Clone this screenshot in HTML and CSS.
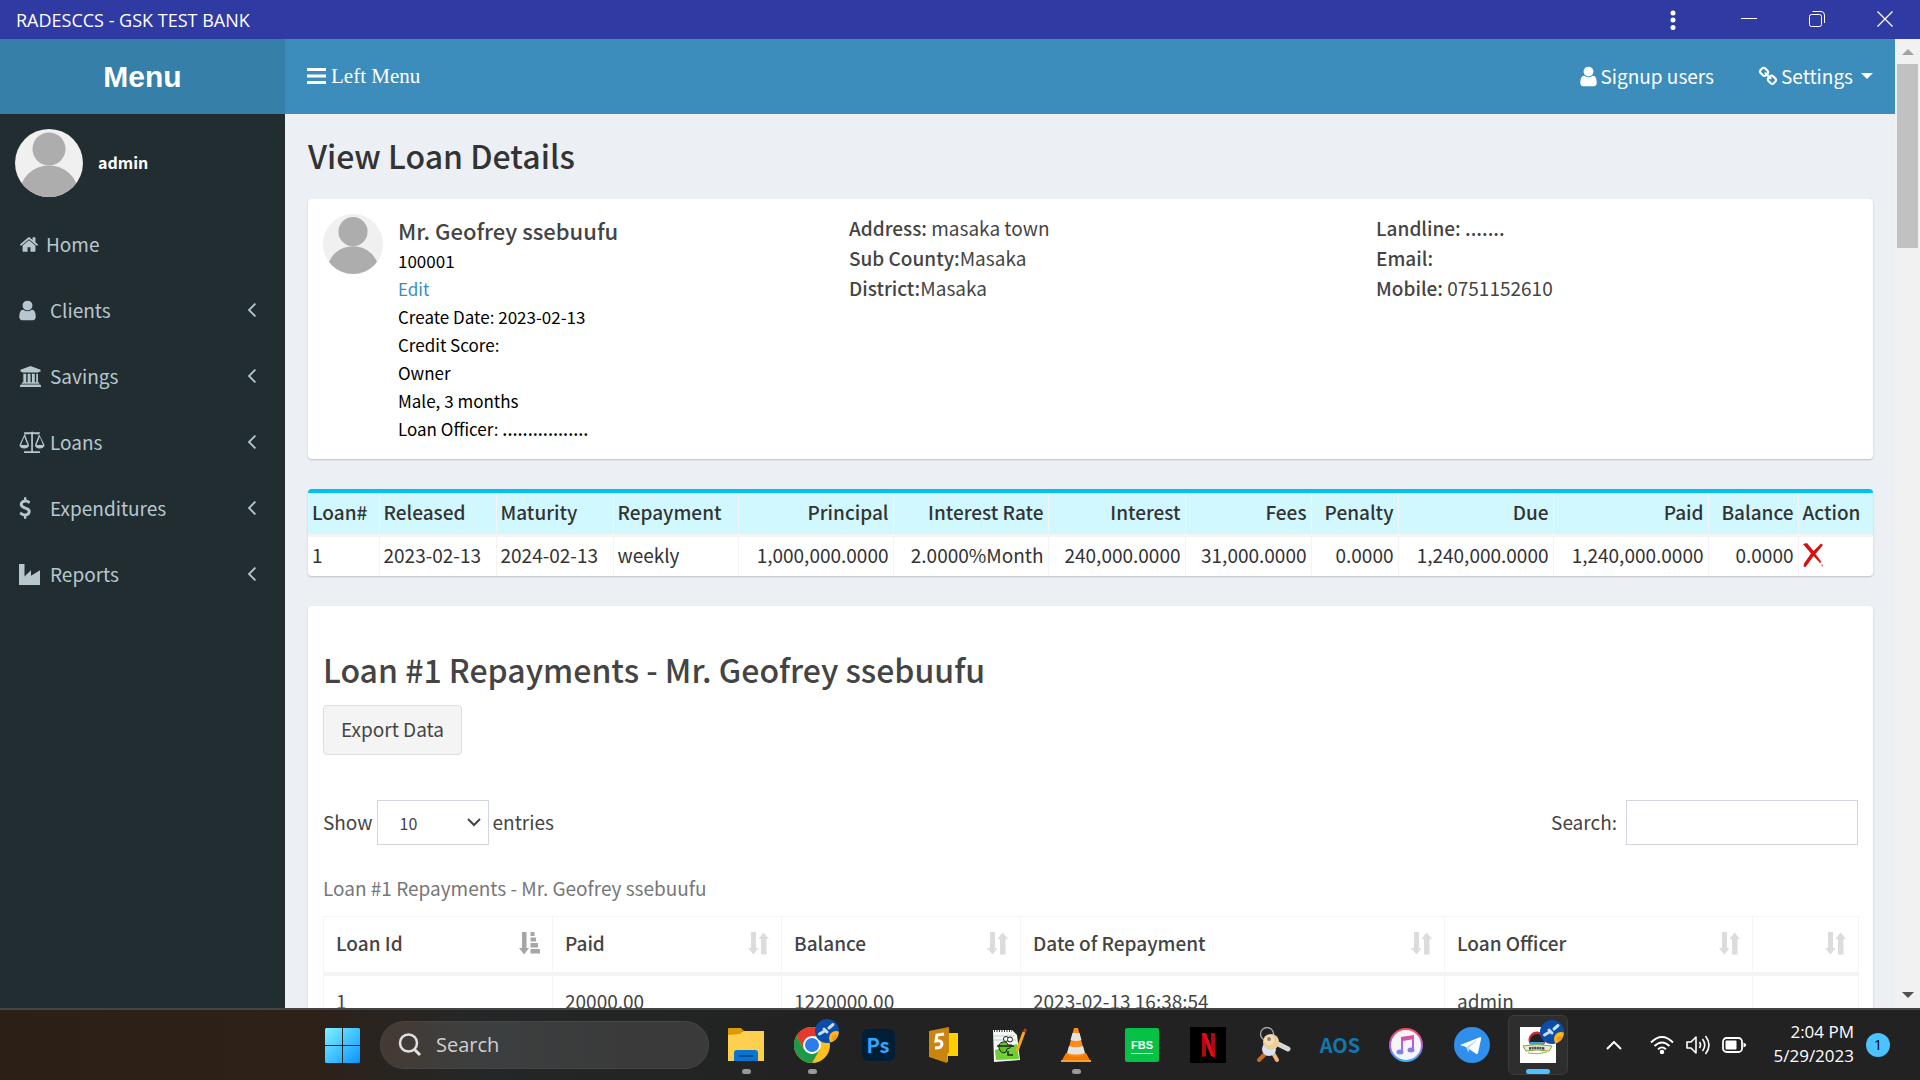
FILE: index.html
```html
<!DOCTYPE html>
<html lang="en">
<head>
<meta charset="utf-8">
<title>RADESCCS - GSK TEST BANK</title>
<link rel="stylesheet" href="styles.css">
</head>
<body>
<svg class="sprite" aria-hidden="true">
  <symbol id="home" viewBox="0 0 1792 1792"><path d="M1472 992v480q0 26-19 45t-45 19h-384v-384h-256v384h-384q-26 0-45-19t-19-45v-480q0-1 .5-3t.5-3l575-474 575 474q1 2 1 6zm223-69l-62 74q-8 9-21 11h-3q-13 0-21-7l-692-577-692 577q-12 8-24 7-13-2-21-11l-62-74q-8-10-7-23.5t11-21.5l719-599q32-26 76-26t76 26l244 204v-195q0-14 9-23t23-9h192q14 0 23 9t9 23v408l219 182q10 8 11 21.5t-7 23.5z"/></symbol>
  <symbol id="user" viewBox="256 0 1280 1792"><path d="M1536 1399q0 109-62.500 187t-150.500 78h-854q-88 0-150.500-78t-62.500-187q0-85 8.500-160.500t31.500-152 58.500-131 94-89 134.500-34.500q131 128 313 128t313-128q76 0 134.500 34.500t94 89 58.500 131 31.500 152 8.500 160.500zm-256-887q0 159-112.500 271.500t-271.500 112.500-271.500-112.500-112.500-271.500 112.500-271.500 271.500-112.500 271.500 112.500 112.500 271.500z"/></symbol>
  <symbol id="link" viewBox="0 0 1792 1792"><path d="M1520 1216q0-40-28-68l-208-208q-28-28-68-28-42 0-72 32 3 3 19 18.500t21.500 21.500 15 19 13 25.500 3.500 27.500q0 40-28 68t-68 28q-15 0-27.500-3.500t-25.500-13-19-15-21.500-21.500-18.500-19q-33 31-33 73 0 40 28 68l206 207q27 27 68 27 40 0 68-26l147-146q28-28 28-67zm-703-705q0-40-28-68l-206-207q-28-28-68-28-39 0-68 27l-147 146q-28 28-28 67 0 40 28 68l208 208q27 27 68 27 42 0 72-31-3-3-19-18.500t-21.500-21.500-15-19-13-25.500-3.500-27.500q0-40 28-68t68-28q15 0 27.500 3.500t25.500 13 19 15 21.500 21.500 18.500 19q33-31 33-73zm895 705q0 120-85 203l-147 146q-83 83-203 83-121 0-204-85l-206-207q-83-83-83-203 0-123 88-209l-88-88q-86 88-208 88-120 0-204-84l-208-208q-84-84-84-204t85-203l147-146q83-83 203-83 121 0 204 85l206 207q83 83 83 203 0 123-88 209l88 88q86-88 208-88 120 0 204 84l208 208q84 84 84 204z"/></symbol>
  <symbol id="angle" viewBox="600 384 640 1152"><path d="M1203 544q0 13-10 23l-393 393 393 393q10 10 10 23t-10 23l-50 50q-10 10-23 10t-23-10l-466-466q-10-10-10-23t10-23l466-466q10-10 23-10t23 10l50 50q10 10 10 23z"/></symbol>
  <symbol id="dollar" viewBox="390 0 1000 1792"><path d="M1362 1185q0 153-99.500 263.500t-258.500 136.500v175q0 14-9 23t-23 9h-135q-13 0-22.500-9.500t-9.500-22.500v-175q-66-9-127.500-31t-101.500-44.500-74-48-46.500-37.500-17.500-18q-17-21-2-41l103-135q7-10 23-12 15-2 24 9l2 2q113 99 243 125 37 8 74 8 81 0 142.500-43t61.500-122q0-28-15-53t-33.500-42-58.500-37.500-66-32-80-32.500q-39-16-61.500-25t-61.500-26.500-62.500-31-56.500-35.500-53.500-42.500-43.500-49-35.500-58-21-66.500-8.500-78q0-138 98-242t255-134v-180q0-13 9.500-22.500t22.500-9.500h135q14 0 23 9t9 23v176q57 6 110.500 23t87 33.500 63.500 37.500 39 29 15 14q17 18 5 38l-81 146q-8 15-23 16-14 3-27-7-3-3-14.500-12t-39-26.500-58.500-32-74.500-26-85.500-11.500q-95 0-155 43t-60 111q0 26 8.500 48t29.500 41.500 39.500 33 56 31 60.500 27 70 27.500q53 20 81 31.500t76 35 75.500 42.500 62 50 53 63.500 31.500 76.500 13 94z"/></symbol>
  <symbol id="bank" viewBox="0 0 23 22"><path d="M11.500 0L22 4v2h-1.500l-.7.700H3.200L2.500 6H1V4zM4 8h3v9h1.500V8h3v9H13V8h3v9h1.500V8h1.800v9h.7l.7 1v.7H2.300V18l.7-1h1zM1.500 19.300h20l1 1V22H.500v-1.700z"/></symbol>
  <symbol id="scale" viewBox="0 0 26 22"><path fill-rule="evenodd" d="M12 1.300a1.500 1.500 0 0 1 2.400 0H21v1.300h-1.200L25.500 14c0 2.300-2 3.500-4.800 3.500S16 16.300 16 14l4-10.500-5.600-.6-.5.600v16.700H21V22H5v-1.800h7.200V3.500l-.6-.6L6 3.500 10 14c0 2.300-2 3.500-4.700 3.500S.500 16.300.500 14L5.800 2.600H5V1.300zM5.300 5.700L2 14h6.500zm15.500 0L17.500 14H24z"/></symbol>
  <symbol id="industry" viewBox="0 0 21 21"><path d="M0 0h5.500v12.500L12 6.300v5.500l9-5.500V21H0z"/></symbol>
  <symbol id="face" viewBox="0 0 68 68"><clipPath id="round"><circle cx="34" cy="34" r="34"/></clipPath><g clip-path="url(#round)"><path fill="#f0f0f0" d="M0 0h68v68H0z"/><circle cx="34" cy="20" r="16.500" fill="#adadad"/><ellipse cx="34" cy="64" rx="29" ry="27.500" fill="#adadad"/></g></symbol>
  <symbol id="sort" viewBox="0 0 21 23"><path d="M3 0h5v16h2.500l-5 6.500L0 16h3zM13 22.500V7h-2.500l5-6.500L21 7h-2.500v15.500z"/></symbol>
  <symbol id="sorted" viewBox="0 0 21 23"><path d="M3 0h4.500v16H10l-4.800 6.500L0 16h3zM11.500 0h4v4h-4zM11.500 5.500h5.500v4h-5.500zM11.500 11h7.500v4.500h-7.500zM11.500 17H21v4.500h-9.500z"/></symbol>
  <symbol id="badge" viewBox="0 0 24 24"><clipPath id="disc"><circle cx="12" cy="12" r="12"/></clipPath><g clip-path="url(#disc)"><path fill="#0b4da8" d="M0 0h24v24H0z"/><circle cx="21" cy="19" r="7" fill="#fbb81c"/><circle cx="20" cy="19" r="3" fill="#f59a12"/><path d="M4.500 15l5-3M9 10l3 3M14 9l4-3.500" stroke="#c8dcf5" stroke-width="3" stroke-linecap="round"/></g></symbol>
</svg>

<div class="titlebar">
  <span class="app-name">RADESCCS - GSK TEST BANK</span>
  <div class="window-controls">
    <button type="button" aria-label="More"><svg width="6" height="22" fill="#fff"><circle cx="3" cy="4" r="2.500"/><circle cx="3" cy="11" r="2.500"/><circle cx="3" cy="18.500" r="2.500"/></svg></button>
    <button type="button" aria-label="Minimize"><svg width="16" height="16"><path d="M0 7.500h16" stroke="#fff"/></svg></button>
    <button type="button" aria-label="Restore"><svg width="16" height="16" fill="none" stroke="#fff"><rect x=".5" y="3.500" width="12" height="12" rx="2"/><path d="M3.500.5H12Q15.500.5 15.500 4v8"/></svg></button>
    <button type="button" aria-label="Close"><svg width="16" height="16"><path d="M.5.5l15 15M15.500.5l-15 15" stroke="#fff" stroke-width="1.300"/></svg></button>
  </div>
</div>

<div class="viewport">
  <div class="shell">
    <header class="topbar">
      <a class="brand" href="#">Menu</a>
      <nav class="topnav">
        <a class="left-toggle" href="#"><svg width="19" height="16"><path d="M0 1.500h19M0 8h19M0 14.500h19" stroke="#fff" stroke-width="3"/></svg>Left Menu</a>
        <a href="#"><svg class="i-user"><use href="#user"/></svg>Signup users</a>
        <a href="#"><svg class="i-link"><use href="#link"/></svg>Settings<svg class="caret" viewBox="0 0 12 6"><path d="M0 0h12L6 6z"/></svg></a>
      </nav>
    </header>
    <div class="columns">
      <aside class="sidebar">
        <div class="account"><svg class="avatar-lg"><use href="#face"/></svg><strong>admin</strong></div>
        <nav class="menu">
          <a href="#"><svg class="i-home"><use href="#home"/></svg><span>Home</span></a>
          <a href="#"><span class="slot"><svg class="i-user"><use href="#user"/></svg></span><span>Clients</span><svg class="i-angle"><use href="#angle"/></svg></a>
          <a href="#"><span class="slot"><svg width="23" height="21"><use href="#bank"/></svg></span><span>Savings</span><svg class="i-angle"><use href="#angle"/></svg></a>
          <a href="#"><span class="slot"><svg width="26" height="22"><use href="#scale"/></svg></span><span>Loans</span><svg class="i-angle"><use href="#angle"/></svg></a>
          <a href="#"><span class="slot"><svg width="12" height="22"><use href="#dollar"/></svg></span><span>Expenditures</span><svg class="i-angle"><use href="#angle"/></svg></a>
          <a href="#"><span class="slot"><svg width="21" height="21"><use href="#industry"/></svg></span><span>Reports</span><svg class="i-angle"><use href="#angle"/></svg></a>
        </nav>
      </aside>
      <main class="content">
        <h1>View Loan Details</h1>

        <section class="box profile">
          <div class="client">
            <svg class="avatar"><use href="#face"/></svg>
            <div>
              <h2>Mr. Geofrey ssebuufu</h2>
              <p>100001</p>
              <p><a href="#">Edit</a></p>
              <p>Create Date: 2023-02-13</p>
              <p>Credit Score:</p>
              <p>Owner</p>
              <p>Male, 3 months</p>
              <p>Loan Officer: <b>.................</b></p>
            </div>
          </div>
          <div class="facts">
            <p><b>Address:</b> masaka town</p>
            <p><b>Sub County:</b>Masaka</p>
            <p><b>District:</b>Masaka</p>
          </div>
          <div class="facts">
            <p><b>Landline: .......</b></p>
            <p><b>Email:</b></p>
            <p><b>Mobile:</b> 0751152610</p>
          </div>
        </section>

        <section class="box summary">
          <table>
            <colgroup><col class="w71"><col class="w117"><col class="w117"><col class="w125"><col class="w155"><col class="w155"><col class="w137"><col class="w126"><col class="w87"><col class="w155"><col class="w155"><col class="w90"><col class="w75"></colgroup>
            <thead><tr><th>Loan#</th><th>Released</th><th>Maturity</th><th>Repayment</th><th class="num">Principal</th><th class="num">Interest Rate</th><th class="num">Interest</th><th class="num">Fees</th><th class="num">Penalty</th><th class="num">Due</th><th class="num">Paid</th><th class="num">Balance</th><th>Action</th></tr></thead>
            <tbody><tr><td>1</td><td>2023-02-13</td><td>2024-02-13</td><td>weekly</td><td class="num">1,000,000.0000</td><td class="num">2.0000%Month</td><td class="num">240,000.0000</td><td class="num">31,000.0000</td><td class="num">0.0000</td><td class="num">1,240,000.0000</td><td class="num">1,240,000.0000</td><td class="num">0.0000</td><td><a href="#" aria-label="Delete"><svg class="cross" viewBox="0 0 21 24"><path fill="#d81010" d="M0 1l4-1 6.500 8L18 .500 20 2l-7.500 9 6 8-1.500 1-6.500-7-6 8.500-2 2.500-2-.5L1 20.500l7-10z"/><circle cx="19.300" cy="22.500" r="1" fill="#e66"/></svg></a></td></tr></tbody>
          </table>
        </section>

        <section class="box repayments">
          <h1>Loan #1 Repayments - Mr. Geofrey ssebuufu</h1>
          <button class="export" type="button">Export Data</button>
          <div class="controls">
            <label>Show <select><option>10</option><option>25</option></select> entries</label>
            <label class="find">Search: <input type="search"></label>
          </div>
          <table>
            <caption>Loan #1 Repayments - Mr. Geofrey ssebuufu</caption>
            <colgroup><col class="w229"><col class="w229"><col class="w239"><col class="w424"><col class="w308"><col class="w106"></colgroup>
            <thead><tr>
              <th><div>Loan Id<svg class="sorted"><use href="#sorted"/></svg></div></th>
              <th><div>Paid<svg><use href="#sort"/></svg></div></th>
              <th><div>Balance<svg><use href="#sort"/></svg></div></th>
              <th><div>Date of Repayment<svg><use href="#sort"/></svg></div></th>
              <th><div>Loan Officer<svg><use href="#sort"/></svg></div></th>
              <th><div><svg><use href="#sort"/></svg></div></th>
            </tr></thead>
            <tbody><tr><td>1</td><td>20000.00</td><td>1220000.00</td><td>2023-02-13 16:38:54</td><td>admin</td><td></td></tr></tbody>
          </table>
        </section>
      </main>
    </div>
  </div>
  <div class="scrollbar">
    <svg width="12" height="6" fill="#a3a3a3"><path d="M0 6h12L6 0z"/></svg>
    <div class="thumb"></div>
    <svg width="12" height="6" fill="#505050"><path d="M0 0h12L6 6z"/></svg>
  </div>
</div>

<footer class="taskbar">
  <button class="start" type="button" aria-label="Start"><svg width="35" height="35"><defs><linearGradient id="win" gradientUnits="userSpaceOnUse" x1="0" y1="0" x2="35" y2="35"><stop offset="0" stop-color="#7cf3ff"/><stop offset="1" stop-color="#0a94ff"/></linearGradient></defs><path fill="url(#win)" d="M1 0h16v17H0V1zM18 0h16l1 1v16H18zM0 18h17v17H1l-1-1zM18 18h17v16l-1 1H18z"/></svg></button>
  <label class="task-search"><svg width="24" height="24" fill="none" stroke="#dfdfe4" stroke-width="2.500"><circle cx="10.500" cy="10" r="8.500"/><path d="M16 16l6 6" stroke-width="3"/></svg><input type="text" placeholder="Search"></label>
  <div class="apps">
    <div class="app running"><svg width="36" height="36" viewBox="0 0 36 36"><path fill="#dc9a04" d="M0 2q0-1 1-1h12l3 3h-2v4H0z"/><path fill="#ffd04d" d="M0 8l12-1 3-3h21v30H0z"/><path fill="#0b74cf" d="M6 34V26q0-3 3-3h18q3 0 3 3v8z"/><path d="M11 29h14" stroke="#084d94" stroke-width="2"/></svg></div>
    <div class="app running"><svg width="36" height="36" viewBox="0 0 36 36"><circle cx="18" cy="18" r="18" fill="#fcc21b"/><path fill="#e5392e" d="M2.400 9A18 18 0 0 1 33.600 9H18l-8 13z"/><path fill="#21974a" d="M2.400 9A18 18 0 0 0 18 36l7.800-13.500H10.200z"/><circle cx="18" cy="18" r="9" fill="#fff"/><circle cx="18" cy="18" r="7" fill="#2b7de9"/></svg><svg class="profile-badge"><use href="#badge"/></svg></div>
    <div class="app"><span class="ps">Ps</span></div>
    <div class="app"><svg width="30" height="36" viewBox="0 0 30 36"><path fill="#ffd000" d="M18 6h11v23H18z"/><path fill="#e0a800" d="M0 27l19 0v8z"/><path fill="#c98510" d="M0 4l20-4v26L0 29zM0 29l18-3v10L0 30z"/><path fill="none" stroke="#fff" stroke-width="3" d="M15 7l-7 1-1 6q6-1 6 3 0 4-7 4"/></svg></div>
    <div class="app"><svg width="34" height="34" viewBox="0 0 34 34"><path fill="#f6f8f4" d="M0 2h19l5 5 3 25L1 34z"/><path stroke="#b5cbe0" d="M1 8h20M1 12h22"/><path fill="#6fd035" d="M2 22q10-3 22-6l2 15L3 32z"/><path fill="#5ec527" stroke="#222" d="M6 20q-1-5 4-6 4-1 5 3h4q-2 4-5 4 0 4-4 4-3-1-4-5z"/><g fill="#fff" stroke="#222"><circle cx="13" cy="11" r="2.500"/><circle cx="17" cy="11.500" r="2.500"/></g><path d="M4 18h17M15 23v4h5" stroke="#222" stroke-width="1.500" fill="none"/><path d="M1 3h18" stroke="#333" stroke-dasharray="1 1.500" stroke-width="2"/><path d="M24 23l7-19" stroke="#f5a623" stroke-width="3"/><path d="M31.500 4l1-3" stroke="#b33" stroke-width="3"/></svg></div>
    <div class="app running"><svg width="30" height="34" viewBox="0 0 30 34"><path fill="#f57c00" d="M5 25h20l5 9H0z"/><path fill="#ff8b1a" d="M13 0h4l7 27q-9 4-18 0z"/><path fill="#e5e5e5" d="M11.500 5h7l2 7q-5 2-11 0zM8 18q7 2.500 14 0l2 7q-9 3-18 0z"/><path fill="#ff9c32" d="M0 32h30v2H0z"/></svg></div>
    <div class="app"><span class="fbs">FBS</span></div>
    <div class="app"><span class="tile-n"><svg width="13" height="24" viewBox="0 0 13 24"><path fill="#b20710" d="M0 0h4v23l-4 1zM9 0h4v24l-4-1z"/><path fill="#e50914" d="M0 0h4l9 24-4-1z"/></svg></span></div>
    <div class="app"><svg width="36" height="36" viewBox="0 0 36 36" stroke-linecap="round"><circle cx="11" cy="7" r="6.500" fill="none" stroke="#aaa" stroke-width="1.300"/><path stroke="#d8d8d8" stroke-width="5" d="M18 15l14 7"/><path stroke="#c86b24" stroke-width="4" d="M9 27l-6 6"/><path stroke="#efb77a" stroke-width="4" d="M17 26l4 7"/><circle cx="13" cy="22" r="7" fill="#d8e2f7"/><circle cx="15" cy="15" r="8" fill="#e9cf9c"/><circle cx="13" cy="13" r="5" fill="#f6ddb0"/><circle cx="13" cy="12" r="2" fill="#888"/></svg></div>
    <div class="app"><span class="aos">AOS</span></div>
    <div class="app"><svg width="34" height="34" viewBox="0 0 34 34"><defs><linearGradient id="ring" gradientUnits="userSpaceOnUse" x1="0" y1="0" x2="0" y2="34"><stop offset="0" stop-color="#ff4a55"/><stop offset=".5" stop-color="#b65ce0"/><stop offset="1" stop-color="#31b7f8"/></linearGradient></defs><circle cx="17" cy="17" r="16" fill="#f5f5f7" stroke="url(#ring)" stroke-width="2"/><g fill="url(#ring)"><path d="M12 9l13-2v4l-11 2v11h-2zM23 8h2v14h-2z"/><ellipse cx="11" cy="24" rx="3.500" ry="2.500"/><ellipse cx="22" cy="22" rx="3.500" ry="2.500"/></g></svg></div>
    <div class="app"><svg width="36" height="36" viewBox="0 0 36 36"><circle cx="18" cy="18" r="18" fill="#2f8fec"/><path fill="#fff" d="M6 18L26.500 10q1 0 .7 1.500L24 26q-.5 1.500-2 .7L12 20z"/><path fill="#b9d9f8" d="M12 20l12-8-9 9-.5 5z"/></svg></div>
    <div class="app running active"><svg width="36" height="36" viewBox="0 0 36 36"><path fill="#fff" d="M0 0h36v36H0z"/><circle cx="17" cy="13" r="8.500" fill="#d62a2a"/><circle cx="17" cy="14" r="7" fill="#222"/><path fill="#3fa0e0" d="M10 15h14v4H10z"/><path fill="#e8edda" stroke="#8aa03c" d="M3 19q14-3 29 0l-3 5q-12-2-23 0z"/><path d="M9 21.500q8-1 16 0" stroke="#444" stroke-width="2.500" stroke-dasharray="2 .6" fill="none"/><path d="M8 26q10 2 19-1" stroke="#9ab04c" fill="none"/></svg><svg class="profile-badge"><use href="#badge"/></svg></div>
  </div>
  <div class="tray">
    <svg width="16" height="9" fill="none" stroke="#fff" stroke-width="2"><path d="M1 8l7-7 7 7"/></svg>
    <svg class="wifi" width="24" height="18" fill="none" stroke="#fff" stroke-width="1.800"><path d="M1 6.500q11-11 22 0M4.500 10q7.500-7 15 0M8 13.300q4-4 8 0"/><circle cx="12" cy="16" r="1.300" fill="#fff"/></svg>
    <svg width="24" height="20" fill="none" stroke="#fff" stroke-width="1.600" stroke-linejoin="round"><path d="M1 7h4l5-5v16l-5-5H1zM13.500 7q2 3 0 6M16.500 4q4.500 6 0 12M19.500 1q7 9 0 18"/></svg>
    <svg width="24" height="16"><rect x="1" y="1" width="19" height="14" rx="3.500" fill="none" stroke="#fff" stroke-width="1.800"/><rect x="3.500" y="3.500" width="11" height="9" rx="1" fill="#fff"/><path d="M21.500 5.500L24 7v2l-2.500 1.500z" fill="#fff"/></svg>
    <div class="clock"><span>2:04 PM</span><span>5/29/2023</span></div>
    <span class="count">1</span>
  </div>
</footer>
</body>
</html>
```
FILE: styles.css
```css
* { box-sizing: border-box; }

body {
  margin: 0;
  height: 100vh;
  display: flex;
  flex-direction: column;
  overflow: hidden;
  font: 19px/30px "Noto Sans CJK SC", "Noto Sans", sans-serif;
  color: #444;
  background: #222d32;
}

h1, h2, p { margin: 0; font-weight: 500; }
a { color: #3c8dbc; text-decoration: none; }
b, th, strong { font-weight: 500; }
button, input, select { font: inherit; color: inherit; }
svg { display: block; flex: none; }
svg:not([fill]) { fill: currentColor; }
.sprite { position: absolute; width: 0; height: 0; }

/* Window title bar */
.titlebar {
  flex: none;
  height: 39px;
  padding-left: 16px;
  display: flex;
  align-items: center;
  justify-content: space-between;
  background: #303aa3;
  color: #fff;
}
.app-name { font: 18px/24px "Open Sans", sans-serif; }
.window-controls { display: flex; }
.window-controls button {
  width: 68px;
  height: 38px;
  padding: 0 2px 2px 0;
  border: 0;
  background: none;
  display: flex;
  align-items: center;
  justify-content: center;
}
.window-controls button:first-child { width: 84px; padding-bottom: 0; }

.viewport { flex: 1; min-height: 0; display: flex; }
.shell { flex: 1; min-width: 0; display: flex; flex-direction: column; overflow: hidden; }

/* Top navigation */
.topbar { flex: none; height: 75px; display: flex; background: #3c8dbc; }
.brand {
  flex: none;
  width: 285px;
  background: #367fa9;
  color: #fff;
  font: bold 30px/75px "Liberation Sans", sans-serif;
  text-align: center;
}
.topnav { flex: 1; display: flex; align-items: center; padding: 0 22px 1px; gap: 44px; }
.topnav a { display: flex; align-items: center; gap: 3px; color: #fff; }
.topnav .left-toggle { margin-right: auto; font-family: "Liberation Serif", serif; font-size: 21px; gap: 5px; }
.i-user { width: 17px; height: 23px; }
.i-link { width: 20px; height: 23px; }
.topnav .caret { width: 12px; height: 6px; margin-left: 5px; }

/* Sidebar */
.columns { flex: 1; min-height: 0; display: flex; }
.sidebar { flex: none; width: 285px; background: #222d32; color: #b8c7ce; }
.account { display: flex; align-items: center; gap: 15px; padding: 15px; color: #fff; font-size: 16px; }
.account strong { font-weight: 700; padding-bottom: 2px; }
.avatar-lg { width: 68px; height: 68px; }
.menu a { display: flex; align-items: center; height: 66px; padding: 0 28px 2px 19px; color: #b8c7ce; }
.i-home { width: 20px; height: 21px; margin-right: 7px; }
.slot { width: 31px; }
.i-angle { width: 10px; height: 16px; margin-left: auto; }

/* Main content */
.content { flex: 1; min-width: 0; padding: 21px 22px 0 23px; background: #ecf0f5; overflow: hidden; }
h1 { font-size: 32px; line-height: 40px; color: #333; }
.box { margin-bottom: 30px; background: #fff; border-radius: 4px; box-shadow: 0 1px 2px rgba(0, 0, 0, .2); }

.profile { margin-top: 24px; height: 260px; padding: 14px 15px; display: grid; grid-template-columns: 526fr 527fr 482fr; }
.client { display: flex; gap: 15px; color: #000; font-size: 17px; line-height: 28px; }
.avatar { width: 60px; height: 60px; margin-top: 1px; }
.client h2 { font-size: 22px; line-height: 34px; color: #444; }
.client p, .facts p { font-weight: 400; }

table { width: 100%; border-collapse: collapse; table-layout: fixed; }
th { text-align: left; }
th.num, td.num { text-align: right; }
.summary { border-top: 4px solid #00c0ef; overflow: hidden; color: #333; }
.summary th { height: 42px; background: #d1f8ff; border-bottom: 3px solid #f4f4f4; }
.summary td { height: 41px; }
.summary th, .summary td { padding: 0 4px 2px; border-right: 1px solid #f4f4f4; white-space: nowrap; }
.cross { width: 21px; height: 24px; }
.w71 { width: 71px; } .w75 { width: 75px; } .w87 { width: 87px; } .w90 { width: 90px; }
.w106 { width: 106px; } .w117 { width: 117px; } .w125 { width: 125px; } .w126 { width: 126px; }
.w137 { width: 137px; } .w155 { width: 155px; } .w229 { width: 229px; } .w239 { width: 239px; }
.w308 { width: 308px; } .w424 { width: 424px; }

/* Repayments */
.repayments { padding: 43px 15px 15px; }
.repayments h1 { color: #444; }
.export {
  display: block;
  height: 50px;
  margin-top: 16px;
  padding: 0 17px 2px;
  border: 1px solid #ddd;
  border-radius: 4px;
  background: #f4f4f4;
}
.controls { display: flex; justify-content: space-between; margin-top: 45px; }
.controls label { display: flex; align-items: baseline; gap: 4px; }
.controls .find { gap: 9px; }
.controls select, .controls input { height: 45px; border: 1px solid #d2d6de; border-radius: 0; background: #fff; font-size: 16px; }
.controls select {
  width: 112px;
  padding: 0 22px;
  appearance: none;
  background: #fff url("data:image/svg+xml,%3Csvg xmlns='http://www.w3.org/2000/svg' width='14' height='9'%3E%3Cpath d='M1 1l6 6 6-6' fill='none' stroke='%23444' stroke-width='2'/%3E%3C/svg%3E") no-repeat right 7px center;
}
.controls input { width: 232px; }
.repayments table { border: 1px solid #f4f4f4; }
caption { padding: 28px 0 13px; text-align: left; color: #777; }
.repayments th, .repayments td { padding: 0 12px 2px; border-right: 1px solid #f4f4f4; white-space: nowrap; }
.repayments th { height: 57px; border-bottom: 4px solid #f4f4f4; }
.repayments th div { display: flex; align-items: center; justify-content: space-between; }
.repayments th svg { width: 21px; height: 23px; margin-left: auto; color: #dcdcdc; }
.repayments th .sorted { color: #a6a6a6; }
.repayments td { height: 56px; }

/* Page scrollbar */
.scrollbar {
  flex: none;
  width: 25px;
  padding: 10px 2px;
  display: flex;
  flex-direction: column;
  align-items: center;
  background: #f1f1f1;
}
.thumb { width: 21px; height: 184px; margin: 9px 0 auto; background: #c1c1c1; }

/* Taskbar */
.taskbar {
  flex: none;
  height: 72px;
  padding-left: 325px;
  display: flex;
  align-items: center;
  border-top: 2px solid #444;
  background: linear-gradient(90deg, #2c1f15 0, #2e2118 300px, #242727 480px, #222 800px);
  color: #fff;
  font-family: "Open Sans", sans-serif;
}
.start { padding: 0; border: 0; background: none; }
.task-search {
  width: 329px;
  height: 48px;
  margin-left: 20px;
  padding-left: 17px;
  display: flex;
  align-items: center;
  gap: 14px;
  border: 1px solid #474545;
  border-radius: 24px;
  background: linear-gradient(90deg, #453a33, #3c3f40 100px, #3a3a3a 250px);
}
.task-search input { width: 200px; padding: 0; border: 0; background: none; font-size: 20px; line-height: 28px; }
.task-search input::placeholder { color: #cfcfcf; }
.apps { display: flex; margin-left: 7px; gap: 6px; }
.app {
  position: relative;
  width: 60px;
  height: 60px;
  display: flex;
  align-items: center;
  justify-content: center;
}
.running::after {
  content: "";
  position: absolute;
  bottom: 1px;
  left: 26px;
  width: 9px;
  height: 5px;
  border-radius: 3px;
  background: #999;
}
.active { border-radius: 6px; border: 1px solid #3c3c3c; background: #2e2e2e; }
.active::after { left: 17px; bottom: 0; width: 24px; background: #4cc2ff; }
.profile-badge { position: absolute; top: 4px; right: 3px; width: 24px; height: 24px; }
.ps, .fbs, .tile-n { display: flex; align-items: center; justify-content: center; }
.ps { width: 33px; height: 32px; border-radius: 6px; background: #001e36; color: #31a8ff; font: bold 20px/24px "Noto Sans CJK SC", sans-serif; }
.fbs { width: 34px; height: 34px; border-radius: 2px; background: #05c145; font: bold 11px/14px "Liberation Sans", sans-serif; text-decoration: underline; text-underline-offset: 4px; }
.tile-n { width: 36px; height: 36px; background: #000; }
.aos { color: #1377ae; font: bold 20px/36px "Liberation Sans Narrow", "Noto Sans CJK SC", sans-serif; }

.tray { flex: 1; display: flex; align-items: center; justify-content: flex-end; gap: 12px; padding-right: 30px; }
.tray .wifi { margin-left: 16px; }
.clock { width: 96px; display: flex; flex-direction: column; text-align: right; font-size: 17px; line-height: 24px; padding-bottom: 2px; }
.count { width: 24px; height: 24px; border-radius: 50%; background: #4cc2ff; color: #000; font-size: 14px; line-height: 24px; text-align: center; }
```
